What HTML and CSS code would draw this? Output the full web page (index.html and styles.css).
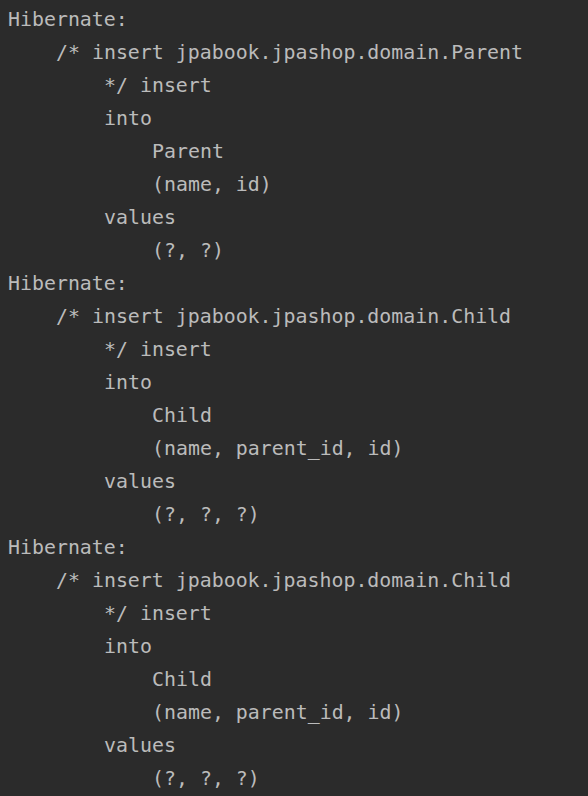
FILE: index.html
```html
<!DOCTYPE html>
<html>
<head>
<meta charset="utf-8">
<link rel="stylesheet" href="styles.css">
</head>
<body>
<div class="console">
  <div class="line">Hibernate:</div>
  <div class="line i1">/* insert jpabook.jpashop.domain.Parent</div>
  <div class="line i2">*/ insert</div>
  <div class="line i2">into</div>
  <div class="line i3">Parent</div>
  <div class="line i3">(name, id)</div>
  <div class="line i2">values</div>
  <div class="line i3">(?, ?)</div>
  <div class="line">Hibernate:</div>
  <div class="line i1">/* insert jpabook.jpashop.domain.Child</div>
  <div class="line i2">*/ insert</div>
  <div class="line i2">into</div>
  <div class="line i3">Child</div>
  <div class="line i3">(name, parent_id, id)</div>
  <div class="line i2">values</div>
  <div class="line i3">(?, ?, ?)</div>
  <div class="line">Hibernate:</div>
  <div class="line i1">/* insert jpabook.jpashop.domain.Child</div>
  <div class="line i2">*/ insert</div>
  <div class="line i2">into</div>
  <div class="line i3">Child</div>
  <div class="line i3">(name, parent_id, id)</div>
  <div class="line i2">values</div>
  <div class="line i3">(?, ?, ?)</div>
</div>
</body>
</html>
```
FILE: styles.css
```css
html, body {
  margin: 0;
  padding: 0;
  background: #2b2b2b;
  height: 100%;
  overflow: hidden;
}
.console {
  padding: 3px 0 0 8px;
  font-family: "DejaVu Sans Mono", "Liberation Mono", monospace;
  font-size: 19.9px;
  line-height: 33px;
  color: #bbbbbb;
}
.line { white-space: pre; }
.line.i1 { padding-left: 48px; }
.line.i2 { padding-left: 96px; }
.line.i3 { padding-left: 144px; }
```
